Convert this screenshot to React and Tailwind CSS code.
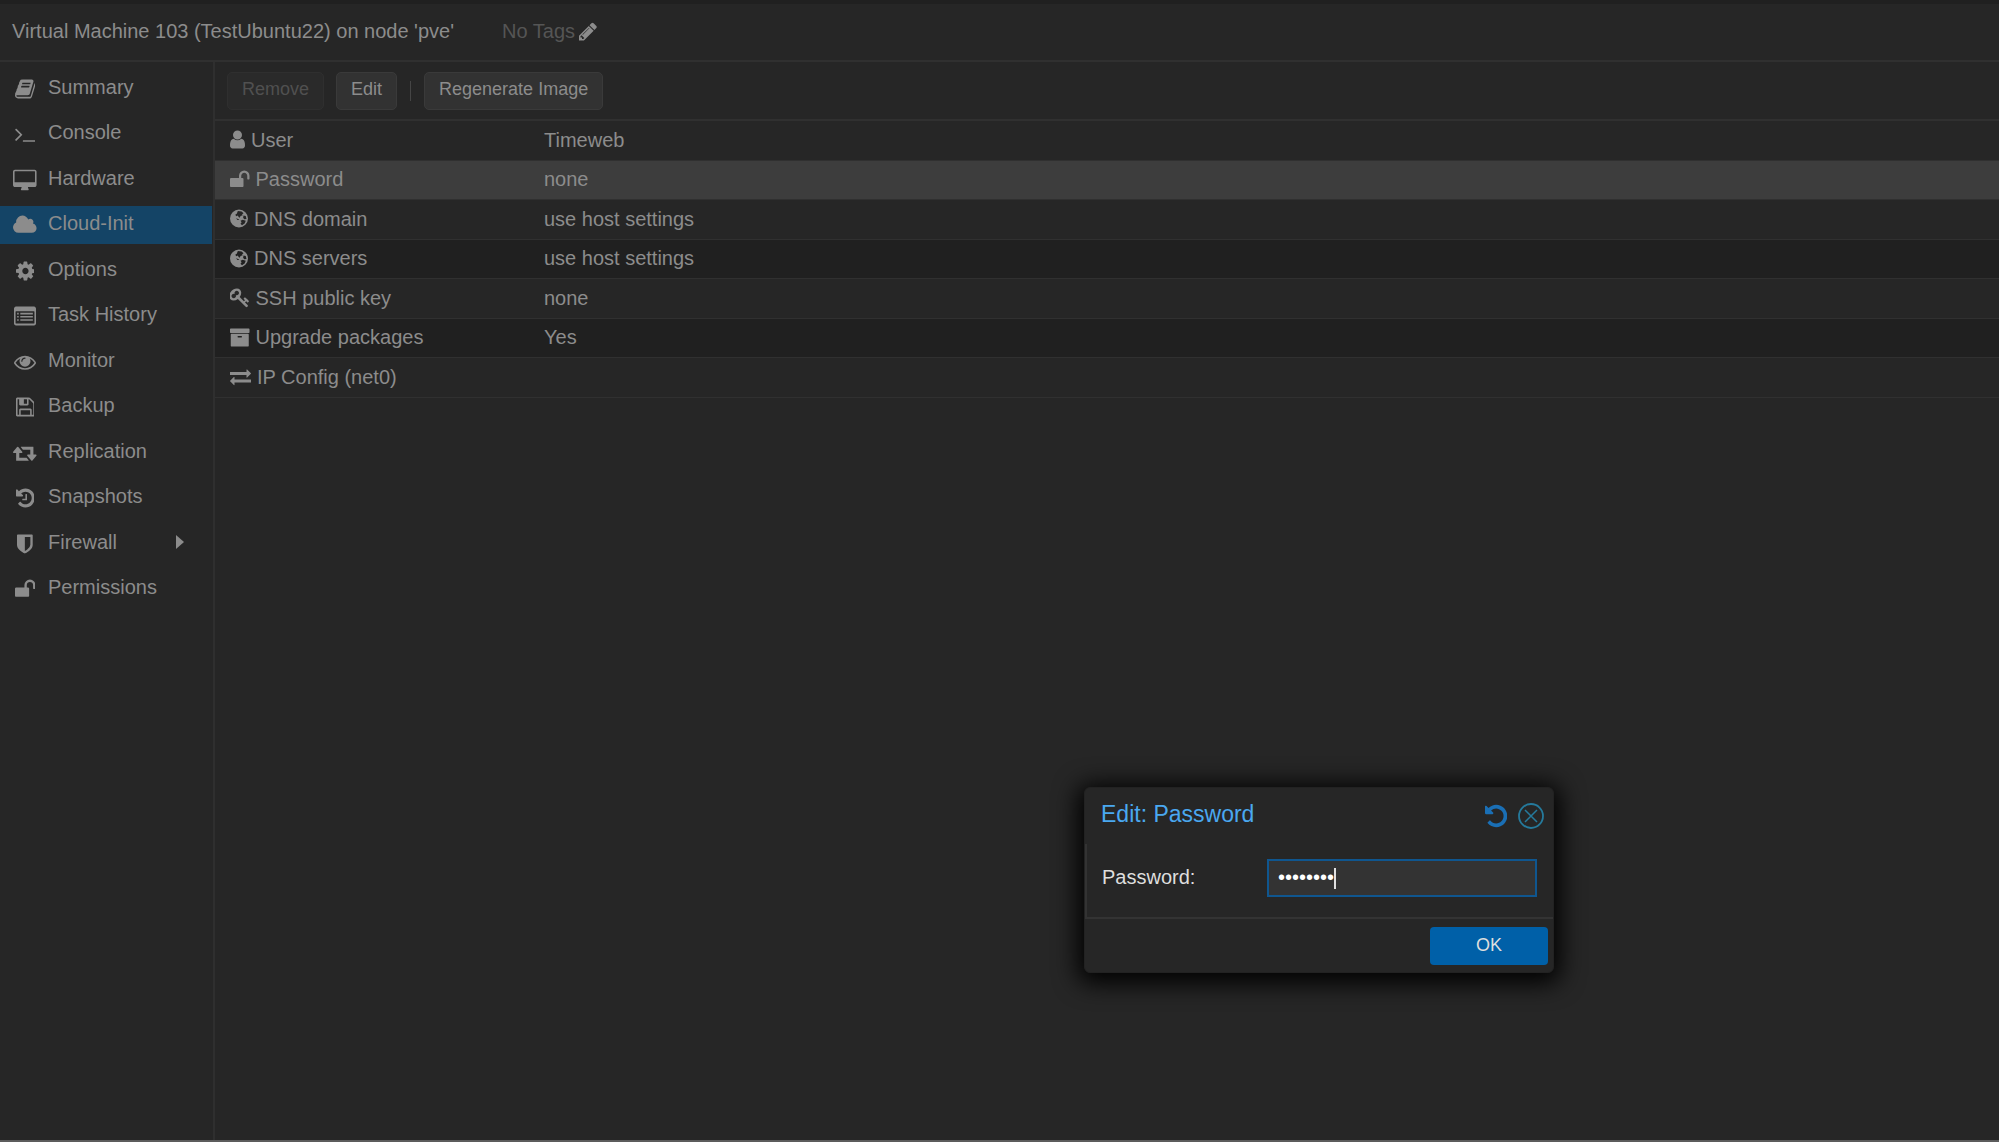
import React, { useState } from 'react';

const ICONS = {
  book: {
    box: '64 0 1664 1792',
    d: 'M1703 478q40 57 18 129l-275 906q-19 64-76.5 107.5t-122.5 43.5h-923q-77 0-148.5-53.5t-99.5-131.5q-24-67-2-127 0-4 3-27t4-37q1-8-3-21.5t-3-19.5q2-11 8-21t16.5-23.5 16.5-23.5q23-38 45-91.5t30-91.5q3-10 .5-30t-.5-28q3-11 17-28t17-23q21-36 42-92t25-90q1-9-2.5-32t.5-28q4-13 22-30.5t22-22.5q19-26 42.5-84.5t27.5-96.5q1-8-3-25.5t-2-26.5q2-8 9-18t18-23 17-21q8-12 16.5-30.5t15-35 16-36 19.5-32 26.5-23.5 36-11.5 47.5 5.5l-1 3q38-9 51-9h761q74 0 114 56t18 130l-274 906q-36 119-71.5 153.5t-128.5 34.5h-869q-27 0-38 15-11 16-1 43 24 70 144 70h923q29 0 56-15.5t35-41.5l300-987q7-22 5-57 38 15 59 43zm-1064 2q-4 13 2 22.5t20 9.5h608q13 0 25.5-9.5t16.5-22.5l21-64q4-13-2-22.5t-20-9.5h-608q-13 0-25.5 9.5t-16.5 22.5zm-83 256q-4 13 2 22.5t20 9.5h608q13 0 25.5-9.5t16.5-22.5l21-64q4-13-2-22.5t-20-9.5h-608q-13 0-25.5 9.5t-16.5 22.5z',
  },
  terminal: {
    box: '64 0 1664 1792',
    d: 'M649 983l-466 466q-10 10-23 10t-23-10l-50-50q-10-10-10-23t10-23l393-393-393-393q-10-10-10-23t10-23l50-50q10-10 23-10t23 10l466 466q10 10 10 23t-10 23zm1079 457v64q0 14-9 23t-23 9h-960q-14 0-23-9t-9-23v-64q0-14 9-23t23-9h960q14 0 23 9t9 23z',
  },
  desktop: {
    box: '-64 -64 1920 1792',
    d: 'M1728 992v-832q0-13-9.5-22.5t-22.5-9.5h-1600q-13 0-22.5 9.5t-9.5 22.5v832q0 13 9.5 22.5t22.5 9.5h1600q13 0 22.5-9.5t9.5-22.5zm128-832v1088q0 66-47 113t-113 47h-544q0 37 16 77.5t32 71 16 43.5q0 26-19 45t-45 19h-512q-26 0-45-19t-19-45q0-14 16-44t32-70 16-78h-544q-66 0-113-47t-47-113v-1088q0-66 47-113t113-47h1600q66 0 113 47t47 113z',
  },
  cloud: {
    box: '64 0 1920 1792',
    d: 'M1984 1152q0 159-112.5 271.5t-271.5 112.5h-1088q-185 0-316.5-131.5t-131.5-316.5q0-132 71-241.5t187-163.5q-2-28-2-43 0-212 150-362t362-150q158 0 286.5 88t187.5 230q70-62 166-62 106 0 181 75t75 181q0 75-41 138 129 30 213 134.5t84 239.5z',
  },
  cog: {
    box: '128 0 1536 1792',
    d: 'M1152 896q0-106-75-181t-181-75-181 75-75 181 75 181 181 75 181-75 75-181zm512-109v222q0 12-8 23t-20 13l-185 28q-19 54-39 91 35 50 107 138 10 12 10 25t-9 23q-27 37-99 108t-94 71q-12 0-26-9l-138-108q-44 23-91 38-16 136-29 186-7 28-36 28h-222q-14 0-24.5-8.5t-11.5-21.5l-28-184q-49-16-90-37l-141 107q-10 9-25 9-14 0-25-11-126-114-165-168-7-10-7-23 0-12 8-23 15-21 51-66.5t54-70.5q-27-50-41-99l-183-27q-13-2-21-12.5t-8-23.5v-222q0-12 8-23t19-13l186-28q14-46 39-92-40-57-107-138-10-12-10-24 0-10 9-23 26-36 98.5-107.5t94.5-71.5q13 0 26 10l138 107q44-23 91-38 16-136 29-186 7-28 36-28h222q14 0 24.5 8.5t11.5 21.5l28 184q49 16 90 37l142-107q9-9 24-9 13 0 25 10 129 119 165 170 7 8 7 22 0 12-8 23-15 21-51 66.5t-54 70.5q26 50 41 98l183 28q13 2 21 12.5t8 23.5z',
  },
  list: {
    box: '0 0 1792 1792',
    d: 'M160 128h1472q66 0 113 47t47 113v1216q0 66-47 113t-113 47h-1472q-66 0-113-47t-47-113v-1216q0-66 47-113t113-47zM128 544v928q0 32 32 32h1472q32 0 32-32v-928q0-32-32-32h-1472q-32 0-32 32zM256 640h128v128h-128zM512 640h1024v128h-1024zM256 896h128v128h-128zM512 896h1024v128h-1024zM256 1152h128v128h-128zM512 1152h1024v128h-1024z',
  },
  eye: {
    box: '0 0 1792 1792',
    d: 'M1664 960q-152-236-381-353 61 104 61 225 0 185-131.5 316.5t-316.5 131.5-316.5-131.5-131.5-316.5q0-121 61-225-229 117-381 353 133 205 333.5 326.5t434.5 121.5 434.5-121.5 333.5-326.5zm-720-384q0-20-14-34t-34-14q-125 0-214.5 89.5t-89.5 214.5q0 20 14 34t34 14 34-14 14-34q0-86 61-147t147-61q20 0 34-14t14-34zm848 384q0 34-20 69-140 230-376.5 368.5t-499.5 138.5-499.5-139-376.5-368q-20-35-20-69t20-69q140-229 376.5-368t499.5-139 499.5 139 376.5 368q20 35 20 69z',
  },
  floppy: {
    box: '128 0 1536 1792',
    d: 'M512 1536h768v-384h-768v384zm896 0h128v-896q0-14-10-38.5t-20-34.5l-281-281q-10-10-34-20t-39-10v416q0 40-28 68t-68 28h-576q-40 0-68-28t-28-68v-416h-128v1280h128v-416q0-40 28-68t68-28h832q40 0 68 28t28 68v416zm-384-928v-320q0-13-9.5-22.5t-22.5-9.5h-192q-13 0-22.5 9.5t-9.5 22.5v320q0 13 9.5 22.5t22.5 9.5h192q13 0 22.5-9.5t9.5-22.5zm640 32v928q0 40-28 68t-68 28h-1344q-40 0-68-28t-28-68v-1344q0-40 28-68t68-28h928q40 0 88 20t76 48l280 280q28 28 48 76t20 88z',
  },
  retweet: {
    box: '-64 64 1920 1792',
    d: 'M1216 1568q0 13-9.5 22.5t-22.5 9.5h-960q-8 0-13.5-2t-9-7-5.5-8-3-11.5-1-11.5v-600h-192q-26 0-45-19t-19-45q0-24 15-41l320-384q19-22 49-22t49 22l320 384q15 17 15 41 0 26-19 45t-45 19h-192v384h576q16 0 25 11l160 192q7 10 7 21zm640-416q0 24-15 41l-320 384q-20 23-49 23t-49-23l-320-384q-15-17-15-41 0-26 19-45t45-19h192v-384h-576q-16 0-25-12l-160-192q-7-9-7-20 0-13 9.5-22.5t22.5-9.5h960q8 0 13.5 2t9 7 5.5 8 3 11.5 1 11.5v600h192q26 0 45 19t19 45z',
  },
  history: {
    box: '128 0 1536 1792',
    d: 'M1664 896q0 156-61 298t-164 245-245 164-298 61q-172 0-327-72.5t-264-204.5q-7-10-6.5-22.5t8.5-20.5l137-138q10-9 25-9 16 2 23 12 73 95 179 147t225 52q104 0 198.5-40.5t163.5-109.5 109.5-163.5 40.5-198.5-40.5-198.5-109.5-163.5-163.5-109.5-198.5-40.5q-98 0-188 35.5t-160 101.5l137 138q31 30 14 69-17 40-59 40h-448q-26 0-45-19t-19-45v-448q0-42 40-59 39-17 69 14l130 129q107-101 244.5-156.5t284.5-55.5q156 0 298 61t245 164 164 245 61 298zm-640-288v448q0 14-9 23t-23 9h-320q-14 0-23-9t-9-23v-64q0-14 9-23t23-9h224v-352q0-14 9-23t23-9h64q14 0 23 9t9 23z',
  },
  undo: {
    box: '128 0 1536 1792',
    d: 'M1664 896q0 156-61 298t-164 245-245 164-298 61q-172 0-327-72.5t-264-204.5q-7-10-6.5-22.5t8.5-20.5l137-138q10-9 25-9 16 2 23 12 73 95 179 147t225 52q104 0 198.5-40.5t163.5-109.5 109.5-163.5 40.5-198.5-40.5-198.5-109.5-163.5-163.5-109.5-198.5-40.5q-98 0-188 35.5t-160 101.5l137 138q31 30 14 69-17 40-59 40h-448q-26 0-45-19t-19-45v-448q0-42 40-59 39-17 69 14l130 129q107-101 244.5-156.5t284.5-55.5q156 0 298 61t245 164 164 245 61 298z',
  },
  shield: {
    box: '256 0 1280 1792',
    d: 'M1344 960v-640h-448v1137q119-63 213-137 235-184 235-360zm192-768v768q0 86-33.5 170.5t-83 150-118 127.5-126.5 103-121 77.5-89.5 49.5-42.5 20q-12 6-26 6t-26-6q-16-7-42.5-20t-89.5-49.5-121-77.5-126.5-103-118-127.5-83-150-33.5-170.5v-768q0-26 19-45t45-19h1152q26 0 45 19t19 45z',
  },
  unlock: {
    box: '64 0 1664 1792',
    d: 'M1728 576v256q0 26-19 45t-45 19h-64q-26 0-45-19t-19-45v-256q0-106-75-181t-181-75-181 75-75 181v192h96q40 0 68 28t28 68v576q0 40-28 68t-68 28h-960q-40 0-68-28t-28-68v-576q0-40 28-68t68-28h672v-192q0-185 131.5-316.5t316.5-131.5 316.5 131.5 131.5 316.5z',
  },
  user: {
    box: '256 0 1280 1792',
    d: 'M1536 1399q0 109-62.5 187t-150.5 78h-854q-88 0-150.5-78t-62.5-187q0-85 8.5-160.5t31.5-152 58.5-131 94-89 134.5-34.5q131 128 313 128t313-128q76 0 134.5 34.5t94 89 58.5 131 31.5 152 8.5 160.5zm-256-887q0 159-112.5 271.5t-271.5 112.5-271.5-112.5-112.5-271.5 112.5-271.5 271.5-112.5 271.5 112.5 112.5 271.5z',
  },
  globe: {
    box: '0 -2 24 28',
    d: 'M12 0a12 12 0 1 1 0 24a12 12 0 1 1 0-24zM10.500 2l5 .5 2.500 2.500-2 1.500 1 1-3 1-1 2.500-1.500-1-1-2-2 1-1.500-2 2-1.500zM18 8l3 .5 1 4-3 .5-1.500-2zM8 11.500l3 1 1.500 1.500-2.500 0zM14 15l3-1.500 4 1.500-1.500 3.500-3.500 2.500-2-2 1.500-2z',
  },
  key: {
    box: '64 0 1664 1792',
    d: 'M832 512q0-80-56-136t-136-56-136 56-56 136q0 42 19 83-41-19-83-19-80 0-136 56t-56 136 56 136 136 56 136-56 56-136q0-42-19-83 41 19 83 19 80 0 136-56t56-136zm851 704q0 17-49 66t-66 49q-9 0-28.5-16t-36.5-33-38.5-40-24.5-26l-96 96 220 220q28 28 28 68 0 42-39 81t-81 39q-40 0-68-28l-671-671q-176 131-365 131-163 0-265.5-102.5t-102.5-265.5q0-160 95-313t248-248 313-95q163 0 265.5 102.5t102.5 265.5q0 189-131 365l355 355 96-96q-3-3-26-24.5t-40-38.5-33-36.5-16-28.5q0-17 49-66t66-49q13 0 23 10 6 6 46 44.5t82 79.5 86.5 86 73 78 28.5 41z',
  },
  archive: {
    box: '64 0 1664 1792',
    d: 'M1088 832q0-26-19-45t-45-19h-256q-26 0-45 19t-19 45 19 45 45 19h256q26 0 45-19t19-45zm576-192v960q0 26-19 45t-45 19h-1408q-26 0-45-19t-19-45v-960q0-26 19-45t45-19h1408q26 0 45 19t19 45zm64-448v256q0 26-19 45t-45 19h-1536q-26 0-45-19t-19-45v-256q0-26 19-45t45-19h1536q26 0 45 19t19 45z',
  },
  exchange: {
    box: '0 0 1792 1792',
    d: 'M1792 1184v192q0 13-9.5 22.5t-22.5 9.5h-1376v192q0 13-9.5 22.5t-22.5 9.5q-12 0-24-10l-319-320q-9-9-9-22 0-14 9-23l320-320q9-9 23-9 13 0 22.5 9.5t9.5 22.5v192h1376q13 0 22.5 9.5t9.5 22.5zm0-544q0 14-9 23l-320 320q-9 9-23 9-13 0-22.5-9.5t-9.5-22.5v-192h-1376q-13 0-22.5-9.5t-9.5-22.5v-192q0-13 9.5-22.5t22.5-9.5h1376v-192q0-14 9-23t23-9q12 0 24 10l319 319q9 9 9 23z',
  },
  pencil: {
    box: '128 0 1536 1792',
    d: 'M491 1536l91-91-235-235-91 91v107h128v128h107zm523-928q0-22-22-22-10 0-17 7l-542 542q-7 7-7 17 0 22 22 22 10 0 17-7l542-542q7-7 7-17zm-54-192l416 416-832 832h-416v-416zm683 96q0 53-37 90l-166 166-416-416 166-165q36-38 90-38 53 0 91 38l235 234q37 39 37 91z',
  },
};

const Icon = ({ name, className }) => (
  <svg viewBox={ICONS[name].box} className={className} fill="currentColor" fillRule="evenodd" aria-hidden="true">
    <path d={ICONS[name].d} />
  </svg>
);

const menuItems = [
  { icon: 'book', label: 'Summary' },
  { icon: 'terminal', label: 'Console' },
  { icon: 'desktop', label: 'Hardware' },
  { icon: 'cloud', label: 'Cloud-Init', active: true },
  { icon: 'cog', label: 'Options' },
  { icon: 'list', label: 'Task History' },
  { icon: 'eye', label: 'Monitor' },
  { icon: 'floppy', label: 'Backup' },
  { icon: 'retweet', label: 'Replication' },
  { icon: 'history', label: 'Snapshots' },
  { icon: 'shield', label: 'Firewall', expandable: true },
  { icon: 'unlock', label: 'Permissions' },
];

const rows = [
  { icon: 'user', label: 'User', value: 'Timeweb' },
  { icon: 'unlock', label: 'Password', value: 'none', selected: true },
  { icon: 'globe', label: 'DNS domain', value: 'use host settings' },
  { icon: 'globe', label: 'DNS servers', value: 'use host settings', alt: true },
  { icon: 'key', label: 'SSH public key', value: 'none' },
  { icon: 'archive', label: 'Upgrade packages', value: 'Yes', alt: true },
  { icon: 'exchange', label: 'IP Config (net0)', value: '' },
];

const Sidebar = () => (
  <nav className="w-[215px] shrink-0 border-r-2 border-[#2f2f2f] pt-2">
    <ul>
      {menuItems.map((item) => (
        <li key={item.label} className="mb-2 odd:mb-[7px]">
          <a
            href="#"
            className={`flex items-center h-[38px] pl-3 pr-7 mr-px ${item.active ? 'bg-[#144466]' : ''}`}
          >
            <span className="w-[26px] mr-[10px] flex justify-center">
              <Icon name={item.icon} className="h-[22px] w-auto" />
            </span>
            <span className="flex-1 pb-1">{item.label}</span>
            {item.expandable && (
              <svg viewBox="0 0 8 14" className="w-2 h-[14px] mb-1" fill="currentColor" aria-hidden="true">
                <path d="M0 0l8 7-8 7z" />
              </svg>
            )}
          </a>
        </li>
      ))}
    </ul>
  </nav>
);

const Toolbar = () => (
  <div className="flex items-center h-[59px] pl-3 border-b-2 border-[#303030] text-[18px]">
    <button disabled className="h-[38px] px-[14px] pb-1 rounded-[5px] border border-[#2f2f2f] bg-[#2a2a2a] text-[#505050]">
      Remove
    </button>
    <button className="h-[38px] ml-3 px-[14px] pb-1 rounded-[5px] border border-[#3a3a3a] bg-[#323232]">Edit</button>
    <span className="w-px h-5 mx-[13px] bg-[#454545]" />
    <button className="h-[38px] px-[14px] pb-1 rounded-[5px] border border-[#3a3a3a] bg-[#323232]">
      Regenerate Image
    </button>
  </div>
);

const SettingsTable = () => (
  <table className="w-full table-fixed border-separate border-spacing-0">
    <tbody>
      {rows.map((row) => (
        <tr
          key={row.label}
          className={`h-10 even:h-[39px] ${
            row.selected ? 'bg-[#3d3d3d]' : row.alt ? 'bg-[#202020]' : ''
          }`}
        >
          <th scope="row" className="w-[315px] p-0 pl-[15px] pb-[2px] font-normal text-left border-b border-[#303030]">
            <span className="flex items-center gap-[6px]">
              <Icon name={row.icon} className="h-[21px] w-auto" />
              {row.label}
            </span>
          </th>
          <td className="p-0 pl-[14px] pb-[2px] border-b border-[#303030]">{row.value}</td>
        </tr>
      ))}
    </tbody>
  </table>
);

const PasswordDialog = () => {
  const [password, setPassword] = useState('12345678');

  return (
    <div
      role="dialog"
      aria-labelledby="dialog-title"
      className="absolute left-[1084px] top-[787px] w-[470px] rounded-[6px] border border-[#222222] bg-[#262626] text-[#dedede] shadow-[0_4px_24px_6px_#000000]"
    >
      <div className="flex items-center h-14 pl-4 pr-[9px]">
        <h2 id="dialog-title" className="flex-1 pb-1 text-[23px] text-[#4aa8f0]">Edit: Password</h2>
        <button aria-label="Reset" className="text-[#1a6fb5]">
          <Icon name="undo" className="h-[26px] w-auto" />
        </button>
        <button aria-label="Close" className="ml-[11px] text-[#257a9c]">
          <svg viewBox="0 0 26 26" className="w-[26px] h-[26px]" fill="none" stroke="currentColor" aria-hidden="true">
            <circle cx="13" cy="13" r="12" strokeWidth="1.8" />
            <path d="M7 7l12 12M19 7L7 19" strokeWidth="1.5" />
          </svg>
        </button>
      </div>
      <div className="flex items-center h-[75px] pl-[15px] pr-4 pb-[6px] border-l-2 border-b-2 border-[#333333]">
        <label htmlFor="password" className="flex-1 pb-[2px]">Password:</label>
        <div className="relative w-[270px]">
          <input
            id="password"
            type="password"
            value={password}
            onChange={(e) => setPassword(e.target.value)}
            className="w-full h-[38px] px-[9px] border-2 border-[#0f568f] bg-[#333333] text-white caret-transparent outline-none"
          />
          {/* text cursor after the last dot, each dot is 7px wide */}
          <span
            className="absolute top-[9px] w-[2px] h-[21px] bg-[#e0e0e0] pointer-events-none"
            style={{ left: 11 + password.length * 7 }}
          />
        </div>
      </div>
      <div className="flex justify-end items-center h-[53px] pr-[5px]">
        <button className="w-[118px] h-[38px] pb-[2px] rounded-[4px] bg-[#0060a8] text-[18px]">OK</button>
      </div>
    </div>
  );
};

const App = () => (
  <div className="relative min-h-screen flex flex-col bg-[#262626] text-[#8c8c8c] text-[20px] leading-6 font-['Liberation_Sans',Arial,sans-serif] border-b-2 border-[#5c5c5c]">
    <header className="flex items-center h-[62px] pl-3 pb-[2px] border-t-4 border-b-2 border-t-[#202020] border-b-[#303030]">
      <h1>Virtual Machine 103 (TestUbuntu22) on node 'pve'</h1>
      <span className="ml-12 text-[#555555]">No Tags</span>
      <button aria-label="Edit Tags" className="ml-1">
        <Icon name="pencil" className="h-[21px] w-auto" />
      </button>
    </header>
    <div className="flex flex-1">
      <Sidebar />
      <main className="flex-1 min-w-0">
        <Toolbar />
        <SettingsTable />
      </main>
    </div>
    <PasswordDialog />
  </div>
);

export default App;
